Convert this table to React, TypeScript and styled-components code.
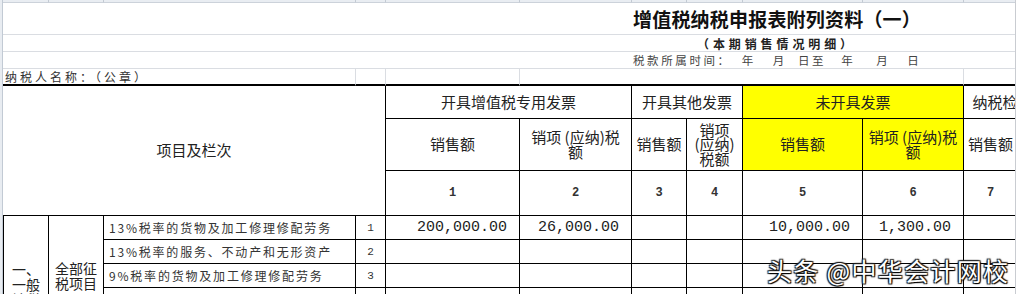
import React from 'react';
import styled, { createGlobalStyle, css } from 'styled-components';

const GlobalStyle = createGlobalStyle`
  html, body { margin: 0; padding: 0; background: #fff; overflow: hidden; }
  body { font-family: "Noto Sans CJK SC", "Noto Sans", sans-serif; color: #222; }
`;

const COLS = [46, 55, 252, 30, 134, 112, 55, 56, 120, 101, 54, 54, 90];
const CJK = `"Noto Sans CJK SC", "Noto Sans", sans-serif`;
const MONO = `"Liberation Mono", "DejaVu Sans Mono", monospace`;

const Sheet = styled.div`
  position: relative;
  width: 1015px;
  height: 294px;
  overflow: hidden;
  border-right: 1px solid #c9ccd1;
  background: linear-gradient(to right, #e8ecf1 0 2px, #c2cad4 2px 3px, #fff 3px);
`;

const Grid = styled.div`
  display: grid;
  margin-left: 3px;
  width: max-content;
  grid-template-columns: ${COLS.map((c) => `${c}px`).join(' ')};
  grid-template-rows: 3px 32px 17px 17px 17px 33px 52px 45px repeat(7, 24px);
`;

type Span = { $span?: number; $rows?: number };

const place = css<Span>`
  grid-column: span ${(p) => p.$span ?? 1};
  grid-row: span ${(p) => p.$rows ?? 1};
  box-sizing: border-box;
  min-width: 0;
  overflow: hidden;
  white-space: nowrap;
`;

const StripCell = styled.div<Span>`
  ${place};
  background: #e9edf2;
  border-right: 1px solid #c3cad3;
  border-bottom: 1px solid #ccd2da;
`;

const BannerCell = styled.div<Span & { $indent: number }>`
  ${place};
  display: flex;
  align-items: center;
  padding-left: ${(p) => p.$indent}px;
  border-bottom: 1px solid #dadde2;
`;

const Title = styled.span`
  font-family: ${CJK};
  font-size: 19px;
  font-weight: 700;
  letter-spacing: 0.2px;
  color: #111;
`;

const Subtitle = styled.span`
  font-family: ${CJK};
  font-size: 12px;
  font-weight: 700;
  letter-spacing: 3.9px;
  color: #222;
`;

const Period = styled.span<{ $gap?: number }>`
  font-family: ${CJK};
  font-size: 11.5px;
  letter-spacing: 2.6px;
  color: #444;
  margin-left: ${(p) => p.$gap ?? 0}px;
`;

const NameCell = styled.div<Span>`
  ${place};
  display: flex;
  align-items: center;
  padding-left: 2px;
  border-right: 1px solid #dadde2;
  border-bottom: 2px solid #000;
  font-family: ${CJK};
  font-size: 12px;
  letter-spacing: 3px;
  color: #333;
`;

const HeadCell = styled.div<Span & { $yellow?: boolean }>`
  ${place};
  display: flex;
  align-items: center;
  justify-content: center;
  text-align: center;
  border-right: 1px solid #000;
  border-bottom: 1px solid #000;
  background: ${(p) => (p.$yellow ? '#ffff00' : '#fff')};
  font-family: ${CJK};
  font-size: 15px;
  line-height: 14.5px;
  color: #222;
`;

const ColumnNo = styled(HeadCell)`
  font-family: ${MONO};
  font-size: 12px;
  font-weight: 700;
  color: #333;
`;

const GroupCell = styled.div<Span & { $first?: boolean }>`
  ${place};
  display: flex;
  align-items: center;
  justify-content: center;
  text-align: center;
  border-left: ${(p) => (p.$first ? '1px solid #000' : 'none')};
  border-right: 1px solid #000;
  border-bottom: 1px solid #000;
  font-family: ${CJK};
  font-size: 14px;
  line-height: 15px;
  color: #222;
`;

const ItemCell = styled.div<Span>`
  ${place};
  display: flex;
  align-items: center;
  padding-left: 5px;
  border-right: 1px solid #000;
  border-bottom: 1px solid #000;
  font-family: ${CJK};
  font-size: 12px;
  letter-spacing: 1.8px;
  color: #333;
`;

const LineNo = styled.div<Span>`
  ${place};
  display: flex;
  align-items: center;
  justify-content: center;
  border-right: 1px solid #000;
  border-bottom: 1px solid #000;
  font-family: ${MONO};
  font-size: 11px;
  color: #333;
`;

const Amount = styled.div<Span>`
  ${place};
  display: flex;
  align-items: center;
  justify-content: flex-end;
  padding-right: 12px;
  border-right: 1px solid #000;
  border-bottom: 1px solid #000;
  font-family: ${MONO};
  font-size: 15px;
  color: #222;
`;

const Watermark = styled.div`
  position: absolute;
  left: 767px;
  top: 256px;
  font-family: ${CJK};
  font-size: 25px;
  line-height: 28px;
  letter-spacing: 1.3px;
  color: #fff;
  white-space: nowrap;
  text-shadow: 0 0 1px #000, 1px 1px 1px #000, -1px -1px 1px #222, 1px -1px 1px #222, -1px 1px 1px #222;
`;

const items: { label: string; amounts: string[] }[] = [
  { label: '13%税率的货物及加工修理修配劳务', amounts: ['200,000.00', '26,000.00', '', '', '10,000.00', '1,300.00', '', '', ''] },
  { label: '13%税率的服务、不动产和无形资产', amounts: Array(9).fill('') },
  { label: '9%税率的货物及加工修理修配劳务', amounts: Array(9).fill('') },
  { label: '9%税率的服务、不动产和无形资产', amounts: Array(9).fill('') },
  { label: '6%税率', amounts: Array(9).fill('') },
  { label: '即征即退货物及加工修理修配劳务', amounts: Array(9).fill('') },
  { label: '即征即退服务、不动产和无形资产', amounts: Array(9).fill('') },
];

export default function App() {
  return (
    <>
      <GlobalStyle />
      <Sheet>
        <Grid>
          {COLS.map((_, i) => (
            <StripCell key={`s${i}`} />
          ))}

          <BannerCell $span={13} $indent={630}>
            <Title>增值税纳税申报表附列资料（一）</Title>
          </BannerCell>
          <BannerCell $span={13} $indent={694}>
            <Subtitle>（本期销售情况明细）</Subtitle>
          </BannerCell>
          <BannerCell $span={13} $indent={630}>
            <Period>税款所属时间：</Period>
            <Period $gap={10}>年</Period>
            <Period $gap={17}>月</Period>
            <Period $gap={11}>日至</Period>
            <Period $gap={15}>年</Period>
            <Period $gap={21}>月</Period>
            <Period $gap={17}>日</Period>
          </BannerCell>

          <NameCell $span={3}>纳税人名称：（公章）</NameCell>
          <NameCell />
          <NameCell />
          <NameCell $span={5} />
          <NameCell $span={3} />

          <HeadCell $span={4} $rows={3}>项目及栏次</HeadCell>
          <HeadCell $span={2}>开具增值税专用发票</HeadCell>
          <HeadCell $span={2}>开具其他发票</HeadCell>
          <HeadCell $span={2} $yellow>未开具发票</HeadCell>
          <HeadCell $span={2}>纳税检查调整</HeadCell>
          <HeadCell>合计</HeadCell>

          <HeadCell>销售额</HeadCell>
          <HeadCell>销项 (应纳)税<br />额</HeadCell>
          <HeadCell>销售额</HeadCell>
          <HeadCell>销项<br />(应纳)<br />税额</HeadCell>
          <HeadCell $yellow>销售额</HeadCell>
          <HeadCell $yellow>销项 (应纳)税<br />额</HeadCell>
          <HeadCell>销售额</HeadCell>
          <HeadCell>销项<br />(应纳)<br />税额</HeadCell>
          <HeadCell>销售额</HeadCell>

          {['1', '2', '3', '4', '5', '6', '7', '8', '9'].map((n) => (
            <ColumnNo key={`c${n}`}>{n}</ColumnNo>
          ))}

          {items.map((row, r) => (
            <React.Fragment key={`r${r}`}>
              {r === 0 && (
                <GroupCell $rows={7} $first>
                  一、<br />一般<br />计税<br />方法<br />计税
                </GroupCell>
              )}
              {r === 0 && (
                <GroupCell $rows={5}>
                  全部征<br />税项目
                </GroupCell>
              )}
              {r === 5 && (
                <GroupCell $rows={2}>
                  其中：<br />即征即退
                </GroupCell>
              )}
              <ItemCell>{row.label}</ItemCell>
              <LineNo>{r + 1}</LineNo>
              {row.amounts.map((a, i) => (
                <Amount key={`a${r}-${i}`}>{a}</Amount>
              ))}
            </React.Fragment>
          ))}
        </Grid>
        <Watermark>头条 @中华会计网校</Watermark>
      </Sheet>
    </>
  );
}
